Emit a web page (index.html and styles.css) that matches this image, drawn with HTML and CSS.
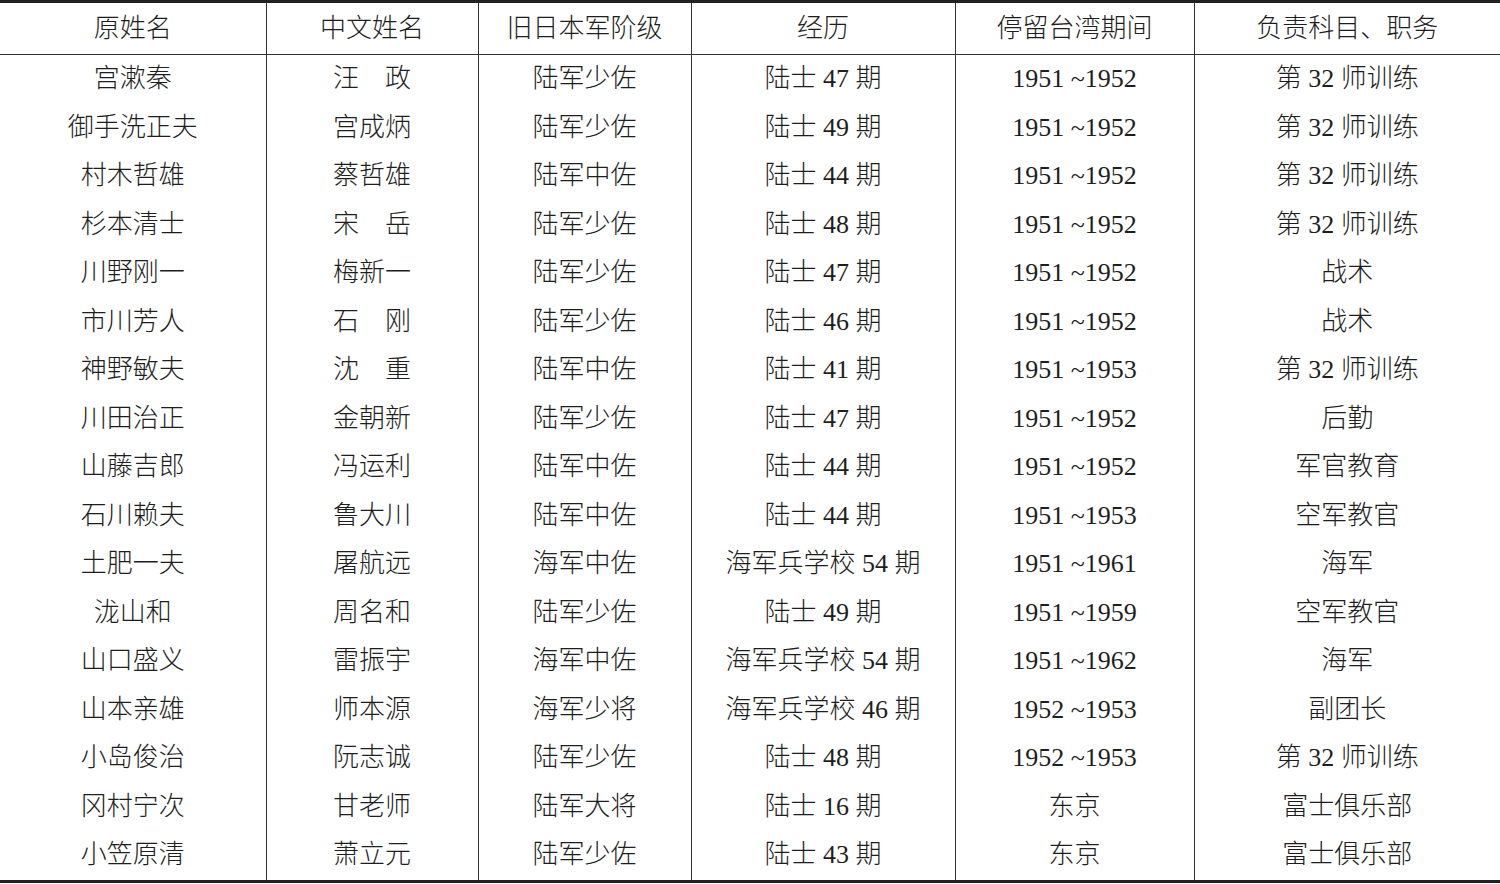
FILE: index.html
```html
<!DOCTYPE html>
<html lang="zh">
<head>
<meta charset="utf-8">
<link rel="stylesheet" href="styles.css">
</head>
<body>
<table class="tbl">
<colgroup>
<col class="c1"><col class="c2"><col class="c3"><col class="c4"><col class="c5"><col class="c6">
</colgroup>
<thead>
<tr><th>原姓名</th><th>中文姓名</th><th>旧日本军阶级</th><th>经历</th><th>停留台湾期间</th><th>负责科目、职务</th></tr>
</thead>
<tbody>
<tr><td>宫漱秦</td><td>汪　政</td><td>陆军少佐</td><td>陆士 47 期</td><td>1951 ~1952</td><td>第 32 师训练</td></tr>
<tr><td>御手洗正夫</td><td>宫成炳</td><td>陆军少佐</td><td>陆士 49 期</td><td>1951 ~1952</td><td>第 32 师训练</td></tr>
<tr><td>村木哲雄</td><td>蔡哲雄</td><td>陆军中佐</td><td>陆士 44 期</td><td>1951 ~1952</td><td>第 32 师训练</td></tr>
<tr><td>杉本清士</td><td>宋　岳</td><td>陆军少佐</td><td>陆士 48 期</td><td>1951 ~1952</td><td>第 32 师训练</td></tr>
<tr><td>川野刚一</td><td>梅新一</td><td>陆军少佐</td><td>陆士 47 期</td><td>1951 ~1952</td><td>战术</td></tr>
<tr><td>市川芳人</td><td>石　刚</td><td>陆军少佐</td><td>陆士 46 期</td><td>1951 ~1952</td><td>战术</td></tr>
<tr><td>神野敏夫</td><td>沈　重</td><td>陆军中佐</td><td>陆士 41 期</td><td>1951 ~1953</td><td>第 32 师训练</td></tr>
<tr><td>川田治正</td><td>金朝新</td><td>陆军少佐</td><td>陆士 47 期</td><td>1951 ~1952</td><td>后勤</td></tr>
<tr><td>山藤吉郎</td><td>冯运利</td><td>陆军中佐</td><td>陆士 44 期</td><td>1951 ~1952</td><td>军官教育</td></tr>
<tr><td>石川赖夫</td><td>鲁大川</td><td>陆军中佐</td><td>陆士 44 期</td><td>1951 ~1953</td><td>空军教官</td></tr>
<tr><td>土肥一夫</td><td>屠航远</td><td>海军中佐</td><td>海军兵学校 54 期</td><td>1951 ~1961</td><td>海军</td></tr>
<tr><td>泷山和</td><td>周名和</td><td>陆军少佐</td><td>陆士 49 期</td><td>1951 ~1959</td><td>空军教官</td></tr>
<tr><td>山口盛义</td><td>雷振宇</td><td>海军中佐</td><td>海军兵学校 54 期</td><td>1951 ~1962</td><td>海军</td></tr>
<tr><td>山本亲雄</td><td>师本源</td><td>海军少将</td><td>海军兵学校 46 期</td><td>1952 ~1953</td><td>副团长</td></tr>
<tr><td>小岛俊治</td><td>阮志诚</td><td>陆军少佐</td><td>陆士 48 期</td><td>1952 ~1953</td><td>第 32 师训练</td></tr>
<tr><td>冈村宁次</td><td>甘老师</td><td>陆军大将</td><td>陆士 16 期</td><td>东京</td><td>富士俱乐部</td></tr>
<tr><td>小笠原清</td><td>萧立元</td><td>陆军少佐</td><td>陆士 43 期</td><td>东京</td><td>富士俱乐部</td></tr>
</tbody>
</table>
</body>
</html>
```

FILE: styles.css
```css
html, body {
  margin: 0;
  padding: 0;
  background: #ffffff;
}
.tbl {
  width: 1500px;
  border-collapse: collapse;
  table-layout: fixed;
  font-family: "Liberation Serif", "Noto Sans CJK SC", serif;
  font-size: 26px;
  font-weight: 300;
  color: #1e1e1e;
  border-top: 3px solid #222;
  border-bottom: 3px solid #222;
}
.c1 { width: 266px; }
.c2 { width: 212px; }
.c3 { width: 213px; }
.c4 { width: 264px; }
.c5 { width: 239px; }
.c6 { width: 306px; }
.tbl th, .tbl td {
  text-align: center;
  vertical-align: middle;
  padding: 0;
  font-weight: 300;
  border-left: 1px solid #333;
  line-height: 1;
  white-space: nowrap;
}
.tbl th:first-child, .tbl td:first-child {
  border-left: none;
}
.tbl thead th {
  height: 51px;
  border-bottom: 1px solid #333;
}
.tbl tbody td {
  height: 48.5px;
}
```
